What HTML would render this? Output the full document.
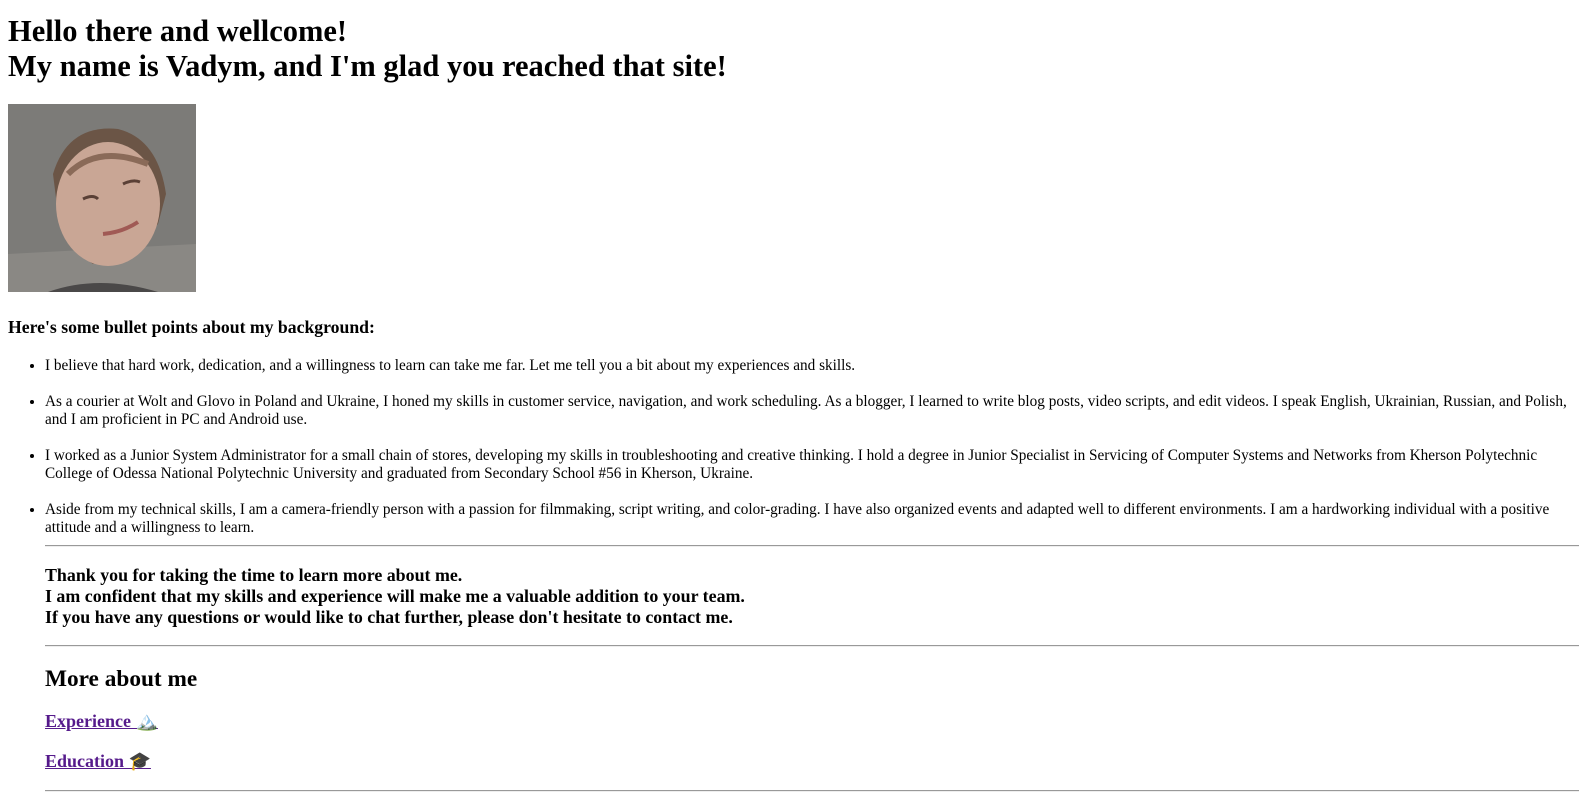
<!DOCTYPE html>
<html><head><meta charset="utf-8"><style>
body{margin:8px;font-family:"Liberation Serif",serif;color:#000;background:#fff}
h1{font-size:30.5px;margin:14px 0 20px;line-height:35px}
.img{width:188px;height:188px;display:block}
h4{font-size:16px;margin:21px 0;line-height:18px}
h4.t{margin-top:26px;font-size:17.7px}
ul{padding-left:37px;margin:17px 0 0}
li{font-size:15.25px;line-height:18px}
li p{margin:18px 0}
li:first-child p{margin-top:0}
li.last p{margin-bottom:0}
hr{border:0;border-top:1px solid #999;border-bottom:1px solid #eee;margin:8px 0}
h3{font-size:17.9px;margin:18px 0 17px;line-height:21px}
h2{font-size:23.3px;margin:18px 0 0;line-height:28px}
h4.l{font-size:18px;margin:20px 0;line-height:20px}
h4.l1{margin-top:18px}
h4.l2{margin-bottom:19px}
a{color:#551a8b}
</style></head><body>
<h1>Hello there and wellcome!<br>My name is Vadym, and I'm glad you reached that site!</h1>
<svg class="img" viewBox="0 0 188 188">
<rect width="188" height="188" fill="#7c7b78"/>
<path d="M0 150 L188 140 L188 188 L0 188Z" fill="#8a8884"/>
<path d="M45 70 Q60 20 110 25 Q150 35 158 90 L150 120 Q120 150 85 160 Q55 140 50 110Z" fill="#6b5546"/>
<ellipse cx="100" cy="100" rx="52" ry="62" fill="#c9a695"/>
<path d="M60 70 Q90 40 140 60" stroke="#8a6a58" stroke-width="6" fill="none"/>
<path d="M75 95 Q85 90 90 95 M115 80 Q125 75 132 78" stroke="#5a4036" stroke-width="3" fill="none"/>
<path d="M95 130 Q115 128 130 118" stroke="#a05a55" stroke-width="4" fill="none"/>
<path d="M40 188 Q90 170 150 188Z" fill="#4a4848"/>
</svg>
<h4 class="t">Here's some bullet points about my background:</h4>
<ul>
<li><p>I believe that hard work, dedication, and a willingness to learn can take me far. Let me tell you a bit about my experiences and skills.</p></li>
<li><p>As a courier at Wolt and Glovo in Poland and Ukraine, I honed my skills in customer service, navigation, and work scheduling. As a blogger, I learned to write blog posts, video scripts, and edit videos. I speak English, Ukrainian, Russian, and Polish, and I am proficient in PC and Android use.</p></li>
<li><p>I worked as a Junior System Administrator for a small chain of stores, developing my skills in troubleshooting and creative thinking. I hold a degree in Junior Specialist in Servicing of Computer Systems and Networks from Kherson Polytechnic College of Odessa National Polytechnic University and graduated from Secondary School #56 in Kherson, Ukraine.</p></li>
<li class="last"><p>Aside from my technical skills, I am a camera-friendly person with a passion for filmmaking, script writing, and color-grading. I have also organized events and adapted well to different environments. I am a hardworking individual with a positive attitude and a willingness to learn.</p></li>
<hr>
<h3>Thank you for taking the time to learn more about me.<br>I am confident that my skills and experience will make me a valuable addition to your team.<br>If you have any questions or would like to chat further, please don't hesitate to contact me.</h3>
<hr>
<h2>More about me</h2>
<h4 class="l l1"><a href="#">Experience 🏔️</a></h4>
<h4 class="l l2"><a href="#">Education 🎓</a></h4>
<hr>
</ul>
</body></html>
